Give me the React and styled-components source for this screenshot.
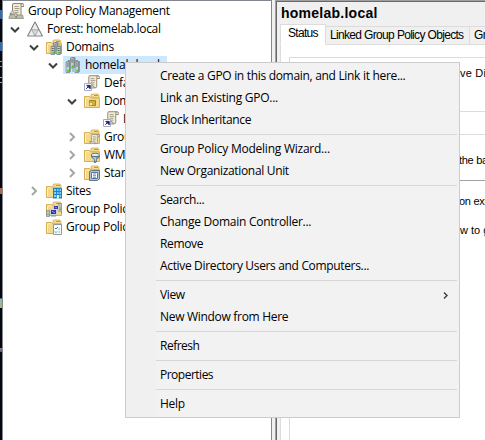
import React from "react";
import styled, { createGlobalStyle } from "styled-components";

const Global = createGlobalStyle`
  * { box-sizing: border-box; }
  html, body { margin: 0; width: 485px; height: 440px; overflow: hidden; background: #fff; }
`;

const Window = styled.main`
  position: relative;
  display: flex;
  width: 485px;
  height: 440px;
  overflow: hidden;
  color: #000;
  font: 12px/18px "Open Sans", "Noto Sans", sans-serif;
`;

const DesktopEdge = styled.div`
  flex: none;
  width: 2px;
  height: 440px;
  background: linear-gradient(
    #05070c 10px, #2f6db0 10px 19px, #05070c 19px 42px, #2f6db0 42px 51px,
    #05070c 51px 61px, #8d9094 61px 62px, #05070c 62px 66px, #8d9094 66px 67px,
    #05070c 67px 77px, #a8a8a8 77px 78px, #05070c 78px 82px, #a8a8a8 82px 83px,
    #05070c 83px 188px, #b06a43 188px 194px, #05070c 194px 298px, #3c62b0 298px 299px,
    #9dbb86 299px 308px, #05070c 308px 348px, #b56b3a 348px 350px, #2f6db0 350px 352px, #05070c 352px
  );
`;

const TreePane = styled.section`
  flex: none;
  width: 270px;
  padding: 1px 0 0 5px;
  border: solid #828790;
  border-width: 1px 1px 0 1px;
  background: #fff;
  overflow: hidden;
`;

const TreeRow = styled.div`
  display: flex;
  align-items: center;
  height: 18px;
  padding-left: ${({ $level }) => ($level ? $level * 19 - 18 : 0)}px;
  white-space: nowrap;
`;

const Expander = styled.span`
  flex: none;
  display: flex;
  width: 16px;
  height: 18px;
  align-items: center;
`;

const TreeLabel = styled.span`
  display: flex;
  align-items: center;
  height: 18px;
  padding-right: 7px;
  background: ${({ $selected }) => ($selected ? "#cce8ff" : "transparent")};
  letter-spacing: -0.28px;
  svg { flex: none; margin: 0 4px 0 ${({ $root }) => ($root ? 0 : 2)}px; }
`;

const Splitter = styled.div`
  flex: none;
  width: 3px;
  background: #f0f0f0;
`;

const Details = styled.section`
  flex: 1;
  min-width: 0;
  padding: 1px 0 0 4px;
  border: solid #a0a0a0;
  border-width: 1px 0 0 1px;
  box-shadow: inset 1px 1px #696969;
  background: #f0f0f0;
  overflow: hidden;
`;

const Title = styled.h1`
  height: 22px;
  margin: 0;
  padding-left: 1px;
  font: bold 14px/22px "Liberation Sans", Arial, sans-serif;
  letter-spacing: 0.25px;
`;

const Tabs = styled.div`
  display: flex;
  align-items: flex-end;
  height: 21px;
`;

const Tab = styled.div`
  flex: none;
  width: ${({ $width }) => $width}px;
  height: ${({ $active }) => ($active ? 21 : 19)}px;
  padding-left: ${({ $active }) => ($active ? 7 : 4)}px;
  border: 1px solid #dcdcdc;
  border-left-width: ${({ $active }) => ($active ? 1 : 0)}px;
  border-bottom-color: ${({ $active }) => ($active ? "#fff" : "#dcdcdc")};
  background: ${({ $active }) => ($active ? "#fff" : "#f0f0f0")};
  font: 12px/17px "Liberation Sans", Arial, sans-serif;
  letter-spacing: ${({ $active }) => ($active ? -0.7 : -0.7)}px;
  word-spacing: ${({ $active }) => ($active ? 0 : 0.3)}px;
  white-space: nowrap;
`;

const TabPage = styled.div`
  height: 395px;
  padding: 12px 0 0 8px;
  border-left: 1px solid #dcdcdc;
  background: #fff;
`;

const Card = styled.div`
  height: ${({ $height }) => $height}px;
  margin-bottom: ${({ $gap }) => $gap || 0}px;
  border: solid #dcdcdc;
  border-width: 1px 0 ${({ $open }) => ($open ? 0 : 1)}px 1px;
`;

const Note = styled.p`
  height: ${({ $height }) => $height}px;
  margin: 0;
  padding: ${({ $top }) => $top}px 0 0 ${({ $left }) => $left || 170}px;
  border-bottom: ${({ $rule }) => ($rule ? "1px solid #a0a0a0" : "0")};
  font: 11px/15px "Liberation Sans", Arial, sans-serif;
  letter-spacing: ${({ $spacing }) => $spacing || 0}px;
  white-space: nowrap;
`;

const Menu = styled.div`
  position: absolute;
  left: 125px;
  top: 62px;
  width: 335px;
  height: 356px;
  padding: 2px;
  border: 1px solid #ccc;
  background: linear-gradient(90deg, #f0f0f0 30px, #f2f2f2 30px);
`;

const MenuItem = styled.div`
  display: flex;
  align-items: center;
  justify-content: space-between;
  height: 22px;
  padding: 0 7px 0 32px;
  letter-spacing: ${({ $spacing }) => $spacing ?? 0}px;
  white-space: nowrap;
`;

const Separator = styled.div`
  height: 1px;
  margin: 3px 0 3px 28px;
  background: #d7d7d7;
`;

function Chevron({ open, color = open ? "#404040" : "#a6a6a6", small }) {
  return (
    <svg width={small ? 9 : 12} height={small ? 9 : 12} viewBox="0 0 12 12" fill="none" stroke={color} strokeWidth={small ? 1.9 : 2}>
      <path d={open ? "M2 4.5 6 8.5 10 4.5" : "M4 2 8 6 4 10"} />
    </svg>
  );
}

const ScrollShape = ({ transform }) => (
  <g transform={transform}>
    <path d="M4 1.5h9q2 0 2 2v1h-3v8q0 2-2 2H3q-2 0-2-2v-1h2.5V3z" fill="#f3ecd2" stroke="#8b8574" />
    <path d="M12 4V3q0-1.5 1.5-1.5M1 12h7q0 2 2 2" fill="none" stroke="#8b8574" />
    <path d="M5.5 4.5h4M5.5 6.5h5M5.5 8.5h4M5.5 10.5h4" stroke="#a29d90" />
  </g>
);

const FolderShape = () => (
  <g>
    <path d="M7 4V2q0-1 1-1h6l1 1.5V5z" fill="#f8df93" stroke="#cda84d" strokeWidth=".8" />
    <path d="M10 2.5h4" stroke="#5cacd5" />
    <path d="M.5 3.5h5L7 5h8.5v9.5H.5z" fill="#f5d98a" stroke="#d7ae52" />
    <path d="M1.5 4.8H5M1.5 5.5v8" stroke="#fff0b8" />
  </g>
);

const Tower = ({ x, y, h = 10 }) => (
  <g>
    <path d={`M${x} ${y + 1}l1.5-1H${x + 5}v${h}l-1.5 1H${x}z`} fill="#8e999d" />
    <path d={`M${x} ${y + 1}h3.5v${h}H${x}z`} fill="#c6d0d2" stroke="#68767b" strokeWidth=".6" />
    <path d={`M${x + 0.8} ${y + 3}h2M${x + 0.8} ${y + 5}h2`} stroke="#5d696e" />
    <path d={`M${x + 2.2} ${y + h - 1.6}v1.8`} stroke="#35cf20" strokeWidth="1.8" />
  </g>
);

function Icon({ kind }) {
  const drawings = {
    root: (
      <>
        <ScrollShape transform="translate(1 -1)" />
        <circle cx="4.5" cy="9.5" r="1.6" fill="#d7d9d5" stroke="#85877f" strokeWidth=".6" />
        <path d="M1 15.5v-2q3.5-4 7 0v2zM9 12h5.5l1 3.5H8z" fill="#bdbbae" stroke="#77776e" strokeWidth=".6" />
      </>
    ),
    forest: (
      <>
        <path d="M8 .8 15.5 15H.5z" fill="#a9acae" stroke="#707476" strokeWidth=".9" />
        <path d="M8 2.3 11 8.2H5zM4.4 9.2 7.2 14.4H1.6zM11.6 9.2 14.4 14.4H8.8z" fill="#eef0f0" />
        <path d="M5.4 9.2h5.2L8 14z" fill="#d4d7d8" />
      </>
    ),
    domains: (
      <>
        <FolderShape />
        <Tower x={7.5} y={3} h={7} /><Tower x={5} y={6.5} h={8} /><Tower x={10.8} y={6.5} h={8} />
      </>
    ),
    domain: (
      <>
        <Tower x={5.5} y={0} h={10} />
        <path d="M3 3.5h10M8 10v5" stroke="#8a9699" />
        <Tower x={1} y={4} h={10.5} /><Tower x={10} y={4} h={10.5} />
      </>
    ),
    link: (
      <>
        <ScrollShape transform="translate(1.5 -.7) scale(.94)" />
        <path d="M.5 8.5h7v7h-7z" fill="#fff" stroke="#a4acc5" />
        <path d="M2.2 13.8 4.6 11.4M2.8 10.4h3.4v3.4z" fill="#24246f" stroke="#24246f" strokeWidth="1" />
      </>
    ),
    ou: (
      <>
        <FolderShape />
        <path d="M5.5 7.5h6v5h-6z" fill="#d5ae3e" stroke="#a78328" />
        <path d="M5.5 9.5h3v3h-3z" fill="#fff0a7" stroke="#b59437" strokeWidth=".7" />
      </>
    ),
    objects: <><FolderShape /><ScrollShape transform="translate(5 4.5) scale(.7)" /></>,
    filter: (
      <>
        <FolderShape />
        <ellipse cx="11.3" cy="8" rx="4.2" ry="1.7" fill="#e0edf4" stroke="#63788a" />
        <path d="M7 9.5h8.7l-3.3 3.2V15l-2 1v-3.3z" fill="#749bb7" stroke="#4d6579" strokeWidth=".7" />
        <path d="M9.3 10.7h2v3" fill="none" stroke="#c7e2ef" />
      </>
    ),
    starter: (
      <>
        <FolderShape />
        <path d="M5.5 15.5v-9l2-1h8v8l-2 2z" fill="#b8c3ce" stroke="#667580" />
        <path d="M7.5 7.5h6v6h-6z" fill="#fff" stroke="#51789f" />
        <path d="M9 9h3M9 10.7h3M9 12.3h3" stroke="#4b75a3" strokeWidth=".8" />
      </>
    ),
    sites: (
      <>
        <FolderShape />
        <path d="M7 5h9v10.5H7z" fill="#1685c9" />
        <path d="M8 7h2M11 7h1.5M13.5 7H15M8 10h2M11 10h1.5M13.5 10H15M8 13h2M13.5 13H15" stroke="#b8e3f7" strokeWidth="1.6" />
        <path d="M10.8 12h2v3.5h-2z" fill="#fff" />
      </>
    ),
    modeling: (
      <>
        <FolderShape />
        <path d="M.5 9.5h3v6h-3zM12.7 2.5h3v6h-3z" fill="#bac1be" stroke="#7c8582" strokeWidth=".7" />
        <path d="M7.5 4.5h5v4h-5zM4.5 8.5h6v5h-6z" fill="#3733a8" stroke="#d0d3d3" />
        <path d="M5 15h5M12 10h3.5v2" fill="none" stroke="#8b9092" />
        <path d="M6 10l3 2M9 6l2 1" stroke="#8c9af0" />
        <path d="M1.5 13.5h1M13.7 7h1" stroke="#57b744" />
      </>
    ),
    results: (
      <>
        <FolderShape />
        <path d="M7.5 5.5h8v10h-8z" fill="#f7f9fa" stroke="#8d989d" />
        <path d="M9 9l1 1 2-2M9 12.5l1 1 1-1" fill="none" stroke="#2686b8" />
        <path d="M12.5 10h1.5M12.5 13h1.5" stroke="#919da5" />
      </>
    ),
  };
  return <svg width="16" height="16" viewBox="0 0 16 16">{drawings[kind]}</svg>;
}

const nodes = [
  { level: 0, icon: "root", text: "Group Policy Management" },
  { level: 1, icon: "forest", text: "Forest: homelab.local", open: true },
  { level: 2, icon: "domains", text: "Domains", open: true },
  { level: 3, icon: "domain", text: "homelab.local", open: true, selected: true },
  { level: 4, icon: "link", text: "Default Domain Policy" },
  { level: 4, icon: "ou", text: "Domain Controllers", open: true },
  { level: 5, icon: "link", text: "Default Domain Controllers Policy" },
  { level: 4, icon: "objects", text: "Group Policy Objects", open: false },
  { level: 4, icon: "filter", text: "WMI Filters", open: false },
  { level: 4, icon: "starter", text: "Starter GPOs", open: false },
  { level: 2, icon: "sites", text: "Sites", open: false },
  { level: 2, icon: "modeling", text: "Group Policy Modeling" },
  { level: 2, icon: "results", text: "Group Policy Results" },
];

const menuGroups = [
  [
    { text: "Create a GPO in this domain, and Link it here...", spacing: -0.31 },
    { text: "Link an Existing GPO...", spacing: -0.26 },
    { text: "Block Inheritance", spacing: -0.33 },
  ],
  [
    { text: "Group Policy Modeling Wizard...", spacing: -0.24 },
    { text: "New Organizational Unit", spacing: -0.33 },
  ],
  [
    { text: "Search...", spacing: -0.35 },
    { text: "Change Domain Controller...", spacing: -0.26 },
    { text: "Remove", spacing: -0.35 },
    { text: "Active Directory Users and Computers...", spacing: -0.34 },
  ],
  [
    { text: "View", spacing: -0.35, submenu: true },
    { text: "New Window from Here", spacing: -0.3 },
  ],
  [{ text: "Refresh", spacing: -0.5 }],
  [{ text: "Properties", spacing: -0.5 }],
  [{ text: "Help", spacing: -0.3 }],
];

export default function App() {
  return (
    <>
      <Global />
      <Window>
        <DesktopEdge />
        <TreePane>
          {nodes.map((n, i) => (
            <TreeRow key={i} $level={n.level}>
              {n.level > 0 && <Expander>{n.open !== undefined && <Chevron open={n.open} />}</Expander>}
              <TreeLabel $selected={n.selected} $root={n.level === 0}>
                <Icon kind={n.icon} />{n.text}
              </TreeLabel>
            </TreeRow>
          ))}
        </TreePane>
        <Splitter />
        <Details>
          <Title>homelab.local</Title>
          <Tabs>
            <Tab $active $width={46}>Status</Tab>
            <Tab $width={144}>Linked Group Policy Objects</Tab>
            <Tab $width={140}>Group Policy Inheritance</Tab>
          </Tabs>
          <TabPage>
            <Card $height={55} $gap={22}><Note $top={8} $height={50} $spacing={0.2}>ve Directory</Note></Card>
            <Card $height={310} $open>
              <Note $top={18} $left={169} $height={46} $spacing={-0.3} $rule>the baseline</Note>
              <Note $top={13} $left={169} $height={28} $spacing={-0.3}>on exists</Note>
              <Note $top={14} $height={30}>w to get</Note>
            </Card>
          </TabPage>
        </Details>
        <Menu>
          {menuGroups.map((group, g) => (
            <React.Fragment key={g}>
              {g > 0 && <Separator />}
              {group.map(({ text, spacing, submenu }) => (
                <MenuItem key={text} $spacing={spacing}>
                  {text}{submenu && <Chevron small color="#404040" />}
                </MenuItem>
              ))}
            </React.Fragment>
          ))}
        </Menu>
      </Window>
    </>
  );
}
